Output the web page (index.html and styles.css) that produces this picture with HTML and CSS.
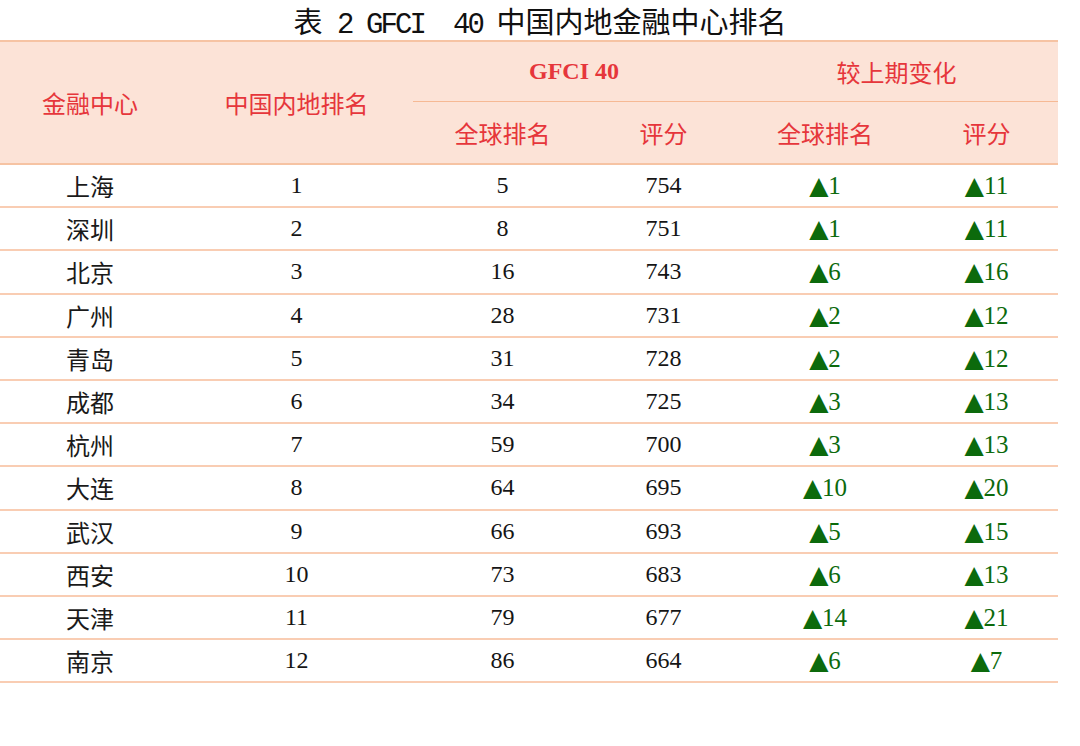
FILE: index.html
```html
<!DOCTYPE html>
<html lang="zh-CN">
<head>
<meta charset="utf-8">
<link rel="stylesheet" href="styles.css">
</head>
<body>
<h1 class="title">表<span class="lat"> 2 GFCI  40 </span>中国内地金融中心排名</h1>
<table class="rank">
  <colgroup>
    <col class="c1"><col class="c2"><col class="c3"><col class="c4"><col class="c5"><col class="c6">
  </colgroup>
  <thead>
    <tr class="h1">
      <th rowspan="2">金融中心</th>
      <th rowspan="2">中国内地排名</th>
      <th colspan="2" class="gfci">GFCI 40</th>
      <th colspan="2" class="grp">较上期变化</th>
    </tr>
    <tr class="h2">
      <th>全球排名</th>
      <th>评分</th>
      <th>全球排名</th>
      <th>评分</th>
    </tr>
  </thead>
  <tbody>
    <tr><td class="city">上海</td><td>1</td><td>5</td><td>754</td><td class="up"><span class="tri">▲</span>1</td><td class="up"><span class="tri">▲</span>11</td></tr>
    <tr><td class="city">深圳</td><td>2</td><td>8</td><td>751</td><td class="up"><span class="tri">▲</span>1</td><td class="up"><span class="tri">▲</span>11</td></tr>
    <tr><td class="city">北京</td><td>3</td><td>16</td><td>743</td><td class="up"><span class="tri">▲</span>6</td><td class="up"><span class="tri">▲</span>16</td></tr>
    <tr><td class="city">广州</td><td>4</td><td>28</td><td>731</td><td class="up"><span class="tri">▲</span>2</td><td class="up"><span class="tri">▲</span>12</td></tr>
    <tr><td class="city">青岛</td><td>5</td><td>31</td><td>728</td><td class="up"><span class="tri">▲</span>2</td><td class="up"><span class="tri">▲</span>12</td></tr>
    <tr><td class="city">成都</td><td>6</td><td>34</td><td>725</td><td class="up"><span class="tri">▲</span>3</td><td class="up"><span class="tri">▲</span>13</td></tr>
    <tr><td class="city">杭州</td><td>7</td><td>59</td><td>700</td><td class="up"><span class="tri">▲</span>3</td><td class="up"><span class="tri">▲</span>13</td></tr>
    <tr><td class="city">大连</td><td>8</td><td>64</td><td>695</td><td class="up"><span class="tri">▲</span>10</td><td class="up"><span class="tri">▲</span>20</td></tr>
    <tr><td class="city">武汉</td><td>9</td><td>66</td><td>693</td><td class="up"><span class="tri">▲</span>5</td><td class="up"><span class="tri">▲</span>15</td></tr>
    <tr><td class="city">西安</td><td>10</td><td>73</td><td>683</td><td class="up"><span class="tri">▲</span>6</td><td class="up"><span class="tri">▲</span>13</td></tr>
    <tr><td class="city">天津</td><td>11</td><td>79</td><td>677</td><td class="up"><span class="tri">▲</span>14</td><td class="up"><span class="tri">▲</span>21</td></tr>
    <tr><td class="city">南京</td><td>12</td><td>86</td><td>664</td><td class="up"><span class="tri">▲</span>6</td><td class="up"><span class="tri">▲</span>7</td></tr>
  </tbody>
</table>
</body>
</html>
```
FILE: styles.css
```css
html, body {
  margin: 0;
  padding: 0;
  background: #ffffff;
}
body {
  width: 1080px;
  font-family: "Liberation Serif", "Noto Sans CJK SC", serif;
  color: #111111;
}
.title {
  margin: 0;
  height: 40px;
  width: 1080px;
  text-align: center;
  font-family: "Noto Sans CJK SC", sans-serif;
  font-weight: normal;
  font-size: 29px;
  line-height: 41px;
  white-space: pre;
  color: #111111;
}
.title .lat {
  font-family: "Liberation Mono", monospace;
  letter-spacing: -0.1em;
  font-size: 29px;
}
.rank {
  width: 1058px;
  border-collapse: collapse;
  table-layout: fixed;
}
.c1 { width: 180px; }
.c2 { width: 233px; }
.c3 { width: 179px; }
.c4 { width: 143px; }
.c5 { width: 180px; }
.c6 { width: 143px; }
.rank th, .rank td {
  padding: 0;
  text-align: center;
  vertical-align: middle;
}
.rank thead th {
  background: #fce3d7;
  color: #e6363b;
  font-family: "Noto Sans CJK SC", sans-serif;
  font-weight: normal;
  font-size: 24px;
}
.rank thead tr.h1 th {
  border-top: 2px solid #f6c3a3;
  height: 59px;
}
.rank thead tr.h1 th.gfci,
.rank thead tr.h1 th.grp {
  border-bottom: 1.5px solid #f6b994;
}
.rank thead th.gfci {
  font-family: "Liberation Serif", serif;
  font-weight: bold;
  font-size: 24px;
}
.rank thead tr.h2 th {
  height: 61px;
  border-bottom: 2px solid #f6c3a3;
}
.rank thead th[rowspan] {
  border-bottom: 2px solid #f6c3a3;
}
.rank tbody td {
  height: 41.2px;
  border-bottom: 2px solid #f9cdb3;
  font-size: 24px;
  color: #151515;
}
.rank tbody td.city {
  font-family: "Noto Sans CJK SC", sans-serif;
  font-size: 24px;
  color: #1a1a1a;
}
.rank tbody td.up {
  color: #0c6a0c;
  font-family: "Liberation Serif", serif;
  font-size: 25px;
}
.tri {
  font-family: "DejaVu Sans", sans-serif;
  font-size: 25px;
}
```
